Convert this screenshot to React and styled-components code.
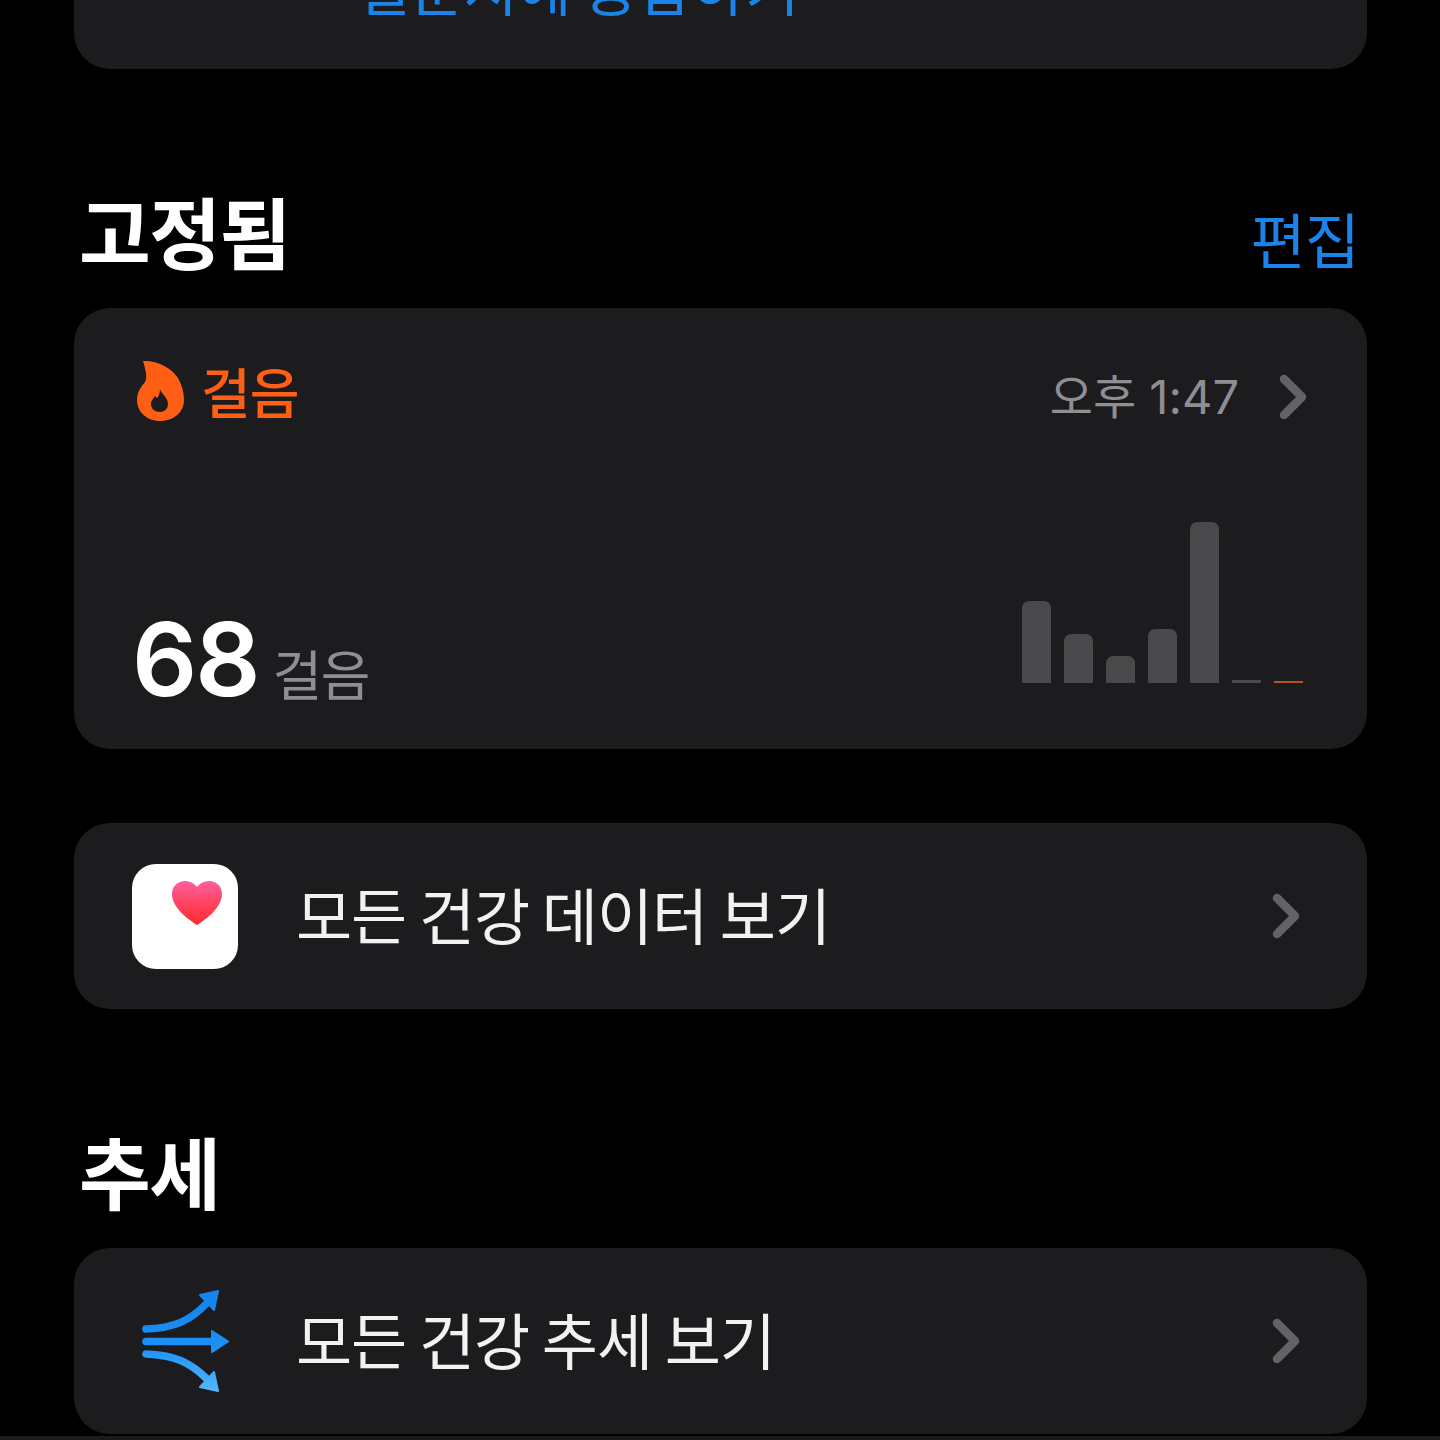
import styled, { createGlobalStyle } from "styled-components";

const bars = [82, 49, 27, 54, 161, 3, 2];

export default function App() {
  return (
    <Page>
      <GlobalStyle />
      <Content>
        <SurveyCard>
          <SurveyLink>설문지에 응답하기</SurveyLink>
        </SurveyCard>

        <SectionHead>
          <SectionTitle>고정됨</SectionTitle>
          <EditLink>편집</EditLink>
        </SectionHead>
        <StepsCard>
          <StepsTop>
            <StepsLabel>
              <FlameIcon />
              <StepsName>걸음</StepsName>
            </StepsLabel>
            <StepsTime>
              <TimeText>오후 1:47</TimeText>
              <Chevron />
            </StepsTime>
          </StepsTop>
          <StepsBottom>
            <StepsValue>
              <BigNumber>68</BigNumber>
              <Unit>걸음</Unit>
            </StepsValue>
            <Chart>
              {bars.map((h, i) => (
                <Bar key={i} $h={h} $last={i === bars.length - 1} />
              ))}
            </Chart>
          </StepsBottom>
        </StepsCard>

        <LinkCard $gap={74}>
          <AppTile>
            <HeartIcon />
          </AppTile>
          <LinkText>모든 건강 데이터 보기</LinkText>
          <Chevron />
        </LinkCard>

        <SectionHead>
          <SectionTitle>추세</SectionTitle>
        </SectionHead>
        <LinkCard>
          <IconSlot>
            <TrendsIcon />
          </IconSlot>
          <LinkText>모든 건강 추세 보기</LinkText>
          <Chevron />
        </LinkCard>
      </Content>
      <BottomEdge />
    </Page>
  );
}

function FlameIcon() {
  return (
    <svg width="50" height="62" viewBox="0 0 50 62" style={{ flexShrink: 0 }}>
      <path
        fillRule="evenodd"
        fill="#ff5f15"
        d="M7 1 C20 0 35 7 42 18 C46 25 48 33 48 40 C48 52 38 61 24 61 C11 61 1 52 1 40 C1 32 5 27 9 22 C12 17 9 8 7 1 Z M24 29 C25 34 32 37 32 44 C32 49 28 52 24 52 C19 52 15 49 15 44 C15 40 18 38 19 36 C20 38 21 38 22 37 C23 35 24 32 24 29 Z"
      />
    </svg>
  );
}

function HeartIcon() {
  return (
    <HeartSvg width="52" height="46" viewBox="0 0 52 46">
      <defs>
        <linearGradient id="heartFill" x1="0" y1="0" x2="0" y2="1">
          <stop offset="0" stopColor="#ff5f9e" />
          <stop offset="1" stopColor="#ff2a2a" />
        </linearGradient>
      </defs>
      <path
        fill="url(#heartFill)"
        d="M26 45 C20 41 1 29 1 14 C1 6 7 1 14 1 C19 1 23 3 26 7 C29 3 33 1 38 1 C45 1 51 6 51 14 C51 29 32 41 26 45 Z"
      />
    </HeartSvg>
  );
}

function TrendsIcon() {
  return (
    <svg width="93" height="112" viewBox="15 10 93 112">
      <defs>
        <linearGradient id="trendFill" gradientUnits="userSpaceOnUse" x1="0" y1="15" x2="0" y2="117">
          <stop offset="0" stopColor="#1483ee" />
          <stop offset="0.55" stopColor="#1a90f5" />
          <stop offset="1" stopColor="#55b8ff" />
        </linearGradient>
      </defs>
      <g fill="none" stroke="url(#trendFill)" strokeWidth="7.5" strokeLinecap="round">
        <path d="M22 54 C50 53 66 46 83 28" />
        <path d="M22 66.5 L90 66.5" />
        <path d="M22 79 C50 80 66 87 83 104" />
      </g>
      <g fill="url(#trendFill)" stroke="url(#trendFill)" strokeWidth="2" strokeLinejoin="round">
        <path d="M76 20 L94 16 L90 35 Z" />
        <path d="M88 56 L104 66.5 L88 77 Z" />
        <path d="M76 112 L94 116 L90 97 Z" />
      </g>
    </svg>
  );
}

function Chevron() {
  return (
    <ChevronSvg width="28" height="46" viewBox="0 0 28 46">
      <path
        d="M5 5 L23 23 L5 41"
        fill="none"
        stroke="#636366"
        strokeWidth="8.5"
        strokeLinecap="round"
        strokeLinejoin="round"
      />
    </ChevronSvg>
  );
}

const GlobalStyle = createGlobalStyle`
  html, body {
    margin: 0;
    padding: 0;
    background: #000;
  }
  * {
    box-sizing: border-box;
  }
`;

const Page = styled.div`
  width: 1440px;
  height: 1440px;
  overflow: hidden;
  background: #000;
  display: flex;
  flex-direction: column;
  font-family: "Noto Sans CJK KR", "Inter", sans-serif;
`;

const Content = styled.div`
  flex: 1;
  padding: 0 73px 0 74px;
  display: flex;
  flex-direction: column;
  min-height: 0;
`;

const BottomEdge = styled.div`
  height: 4px;
  background: #1a1a1b;
  flex-shrink: 0;
`;

const Card = styled.div`
  background: #1c1c1e;
  border-radius: 36px;
`;

const SurveyCard = styled(Card)`
  height: 69px;
  border-radius: 0 0 36px 36px;
  padding: 0 0 54px 282px;
  display: flex;
  align-items: flex-end;
  overflow: hidden;
  flex-shrink: 0;
`;

const SurveyLink = styled.span`
  font-size: 59px;
  line-height: 59px;
  color: #1a84ea;
  white-space: nowrap;
  letter-spacing: -0.5px;
`;

const SectionHead = styled.div`
  height: 239px;
  flex-shrink: 0;
  padding: 0 8px 34px 5px;
  display: flex;
  align-items: flex-end;
  justify-content: space-between;
`;

const SectionTitle = styled.h2`
  margin: 0;
  font-size: 78px;
  line-height: 88px;
  font-weight: 700;
  color: #fff;
  letter-spacing: -1.5px;
`;

const EditLink = styled.span`
  font-size: 60px;
  line-height: 68px;
  color: #1a84ea;
  letter-spacing: -1px;
  margin-bottom: 2px;
`;

const StepsCard = styled(Card)`
  height: 441px;
  flex-shrink: 0;
  padding: 50px 60px 35px 60px;
  display: flex;
  flex-direction: column;
  justify-content: space-between;
`;

const StepsTop = styled.div`
  display: flex;
  align-items: center;
  justify-content: space-between;
`;

const StepsLabel = styled.div`
  display: flex;
  align-items: center;
  gap: 15px;
  padding-left: 2px;
`;

const StepsName = styled.span`
  font-size: 54px;
  line-height: 62px;
  font-weight: 500;
  color: #ff5f15;
  letter-spacing: -1px;
`;

const StepsTime = styled.div`
  display: flex;
  align-items: center;
  gap: 40px;
  margin-top: 12px;
`;

const TimeText = styled.span`
  font-family: "Inter", "Noto Sans CJK KR", sans-serif;
  font-size: 47px;
  line-height: 54px;
  color: #8e8e93;
  margin-top: 0;
`;

const StepsBottom = styled.div`
  display: flex;
  align-items: flex-end;
  justify-content: space-between;
`;

const StepsValue = styled.div`
  display: flex;
  align-items: baseline;
  gap: 14px;
`;

const BigNumber = styled.span`
  font-family: "Inter", sans-serif;
  font-size: 102px;
  line-height: 110px;
  font-weight: 600;
  color: #fff;
  letter-spacing: -2px;
  margin-left: -2px;
`;

const Unit = styled.span`
  font-size: 54px;
  line-height: 60px;
  color: #8e8e93;
  letter-spacing: -1.5px;
`;

const Chart = styled.div`
  display: flex;
  align-items: flex-end;
  gap: 13px;
  margin-right: 4px;
  margin-bottom: 31px;
`;

const Bar = styled.div`
  width: 29px;
  height: ${({ $h }) => $h}px;
  border-radius: ${({ $h }) => ($h > 5 ? "7px 7px 0 0" : "0")};
  background: ${({ $last }) => ($last ? "#b4532a" : "#49494b")};
`;

const LinkCard = styled(Card)`
  height: 186px;
  flex-shrink: 0;
  margin-top: ${({ $gap }) => $gap || 0}px;
  padding: 0 67px 0 58px;
  display: flex;
  align-items: center;
`;

const AppTile = styled.div`
  width: 106px;
  height: 105px;
  border-radius: 24px;
  background: #fff;
  flex-shrink: 0;
  display: flex;
  justify-content: flex-end;
  padding: 16px 15px 0 0;
`;

const HeartSvg = styled.svg`
  display: block;
`;

const IconSlot = styled.div`
  width: 106px;
  flex-shrink: 0;
  display: flex;
  justify-content: center;
`;

const LinkText = styled.span`
  flex: 1;
  margin-left: 58px;
  margin-top: -4px;
  font-size: 61px;
  line-height: 72px;
  color: #f2f2f3;
  letter-spacing: -1px;
  white-space: nowrap;
`;

const ChevronSvg = styled.svg`
  display: block;
  flex-shrink: 0;
`;
